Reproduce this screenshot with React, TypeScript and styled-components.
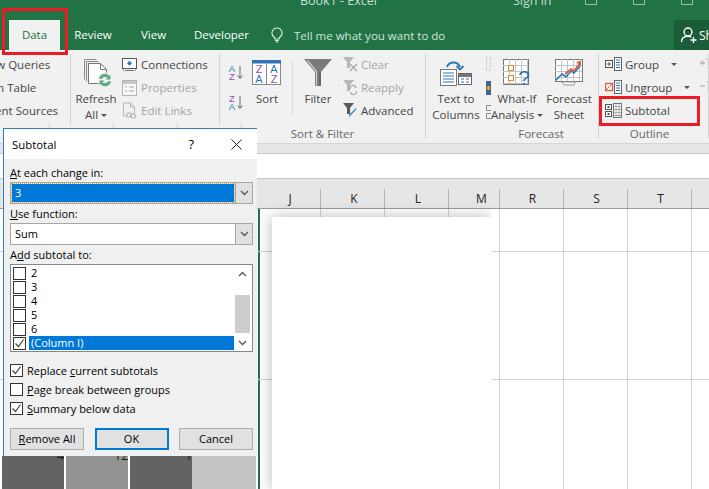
import styled, { createGlobalStyle } from "styled-components";

const FONT = `"Open Sans", "Noto Sans", sans-serif`;
const GREEN = "#217346";

const Global = createGlobalStyle`
  html, body { margin: 0; padding: 0; background: #fff; }
  body { font-family: ${FONT}; font-size: 11.5px; }
  * { box-sizing: border-box; }
`;

const Page = styled.div`
  position: relative;
  width: 709px;
  height: 489px;
  overflow: hidden;
  background: #fff;
`;

/* ---- title + tabs ---- */
const Head = styled.header`
  background: ${GREEN};
  height: 50px;
  color: #fff;
`;
const TitleBar = styled.div`
  height: 20px;
  overflow: hidden;
  display: flex;
  color: #c9ded2;
  font-size: 12.5px;
  line-height: 16px;
`;
const TitleBit = styled.span<{ $w: number }>`
  width: ${(p) => p.$w}px;
  flex: none;
  margin-top: -7px;
`;
const WinGlyph = styled.i<{ $w: number }>`
  display: block;
  flex: none;
  width: 12px;
  height: 5px;
  margin-right: ${(p) => p.$w}px;
  border: 1px solid #9dbfac;
  border-top: 0;
`;
const TabRow = styled.nav`
  height: 30px;
  display: flex;
  padding-left: 9px;
`;
const Tab = styled.div<{ $w: number; $active?: boolean }>`
  width: ${(p) => p.$w}px;
  height: 30px;
  line-height: 30px;
  text-align: center;
  font-size: 11.5px;
  background: ${(p) => (p.$active ? "#f1f1f1" : "transparent")};
  color: ${(p) => (p.$active ? GREEN : "#fff")};
`;
const TellMe = styled.div`
  display: flex;
  align-items: center;
  gap: 11px;
  margin-left: 9px;
  color: #d3e3da;
  font-size: 11.5px;
`;
const Share = styled.div`
  margin-left: auto;
  width: 35px;
  background: #1b5c39;
  display: flex;
  align-items: center;
  gap: 1px;
  padding-left: 6px;
  overflow: hidden;
  white-space: nowrap;
  font-size: 12px;
`;

/* ---- ribbon ---- */
const Ribbon = styled.section`
  height: 93px;
  display: flex;
  background: #f1f1f1;
  color: #444;
  padding-top: 4px;
  overflow: hidden;
  white-space: nowrap;
`;
const Group = styled.div<{ $w: number }>`
  width: ${(p) => p.$w}px;
  flex: none;
  height: 84px;
  border-right: 1px solid #d4d4d4;
  display: flex;
  flex-direction: column;
  overflow: hidden;
`;
const Tools = styled.div<{ $pad: number }>`
  height: 69px;
  display: flex;
  padding-left: ${(p) => p.$pad}px;
`;
const GroupLabel = styled.div<{ $pl?: number; $pr?: number }>`
  height: 15px;
  line-height: 15px;
  margin-top: 3px;
  padding-left: ${(p) => p.$pl ?? 0}px;
  padding-right: ${(p) => p.$pr ?? 0}px;
  text-align: center;
  color: #666;
`;
const Big = styled.div<{ $w: number; $ml?: number }>`
  width: ${(p) => p.$w}px;
  margin-left: ${(p) => p.$ml ?? 0}px;
  flex: none;
  display: flex;
  flex-direction: column;
  align-items: center;
`;
const BigIcon = styled.div<{ $pl?: number }>`
  height: 37px;
  padding-left: ${(p) => p.$pl ?? 0}px;
  display: flex;
  align-items: center;
  justify-content: center;
`;
const BigText = styled.div`
  line-height: 16px;
  text-align: center;
`;
const Caret = styled.i<{ $ml?: number }>`
  display: inline-block;
  vertical-align: middle;
  margin-left: ${(p) => p.$ml ?? 3}px;
  border-left: 3px solid transparent;
  border-right: 3px solid transparent;
  border-top: 3px solid #555;
`;
const SmallCol = styled.div<{ $ml?: number }>`
  margin-left: ${(p) => p.$ml ?? 0}px;
  flex: none;
  display: flex;
  flex-direction: column;
`;
const Small = styled.div<{ $off?: boolean }>`
  height: 23px;
  padding-bottom: 2px;
  display: flex;
  align-items: center;
  gap: 3px;
  color: ${(p) => (p.$off ? "#a3a3a3" : "#444")};
`;
const SortCol = styled.div`
  flex: none;
  width: 16px;
  display: flex;
  flex-direction: column;
  gap: 14px;
  padding-top: 10px;
`;
const InnerSep = styled.div<{ $ml: number }>`
  width: 1px;
  height: 55px;
  margin: 6px 0 0 ${(p) => p.$ml}px;
  background: #dadada;
  flex: none;
`;
const ThinCol = styled.div`
  flex: none;
  width: 8px;
  margin-left: 5px;
  display: flex;
  flex-direction: column;
  padding-top: 3px;
  gap: 10px;
`;

/* ---- sheet ---- */
const Strip = styled.div`
  height: 10px;
  background: #e6e6e6;
  border-top: 1px solid #d4d4d4;
`;
const FormulaBar = styled.div`
  height: 26px;
  border-top: 1px solid #c6c6c6;
  border-bottom: 1px solid #c6c6c6;
  background: #fff;
`;
const HeaderRow = styled.div`
  height: 30px;
  display: flex;
  align-items: flex-end;
  background: #e6e6e6;
  border-bottom: 1px solid #9b9b9b;
`;
const ColHead = styled.div<{ $w: number; $pl?: number }>`
  width: ${(p) => p.$w}px;
  flex: none;
  height: 19px;
  line-height: 19px;
  padding-left: ${(p) => p.$pl ?? 0}px;
  text-align: center;
  color: #222;
  font-size: 12px;
  border-right: 1px solid #b4b4b4;
`;
const Row = styled.div<{ $h: number }>`
  height: ${(p) => p.$h}px;
  display: flex;
  border-bottom: 1px solid #d2d2d2;
`;
const Cell = styled.div<{ $w: number; $frozen?: boolean }>`
  width: ${(p) => p.$w}px;
  flex: none;
  border-right: ${(p) => (p.$frozen ? `2px solid ${GREEN}` : "1px solid #d2d2d2")};
`;

const Blank = styled.div`
  position: absolute;
  left: 272px;
  top: 217px;
  width: 219px;
  height: 272px;
  background: #fff;
  box-shadow: 0 0 14px rgba(0, 0, 0, 0.28);
  clip-path: inset(-20px 0 0 -20px);
`;

const Annot = styled.div<{ $x: number; $y: number; $w: number; $h: number }>`
  position: absolute;
  left: ${(p) => p.$x}px;
  top: ${(p) => p.$y}px;
  width: ${(p) => p.$w}px;
  height: ${(p) => p.$h}px;
  border: 3px solid #ed1c24;
`;

const Ticks = styled.div`
  position: absolute;
  left: 0;
  top: 125px;
  width: 257px;
  height: 4px;
  background: repeating-linear-gradient(
    to right,
    #f1f1f1 0 49px,
    #c9c9c9 49px 50px,
    #f1f1f1 50px 64px
  );
`;

/* ---- dialog ---- */
const Dialog = styled.div`
  position: absolute;
  left: 3px;
  top: 128px;
  width: 254px;
  height: 328px;
  background: #f0f0f0;
  border: 1px solid #2f7fc4;
  border-bottom: 0;
  border-right: 0;
  color: #000;
  display: flex;
  flex-direction: column;
  font-size: 11px;
`;
const DlgTitle = styled.div`
  height: 30px;
  flex: none;
  background: #fff;
  display: flex;
  align-items: center;
  padding: 0 15px 0 8px;
  font-size: 11.4px;
`;
const Help = styled.span`
  margin-left: auto;
  margin-right: 37px;
  font-size: 13px;
`;
const DlgBody = styled.div`
  padding: 5px 4px 0 6px;
  display: flex;
  flex-direction: column;
`;
const FieldLabel = styled.div`
  height: 18px;
  line-height: 17px;
`;
const Select = styled.div`
  height: 22px;
  border: 1px solid #a6a6a6;
  background: #fff;
  display: flex;
  margin-bottom: 1px;
`;
const SelectValue = styled.div<{ $sel?: boolean }>`
  flex: 1;
  margin: 1px;
  padding-left: 3px;
  line-height: 18px;
  color: ${(p) => (p.$sel ? "#fff" : "#000")};
  background: ${(p) => (p.$sel ? "#0078d7" : "#fff")};
  outline: ${(p) => (p.$sel ? "1px dotted #e9a23b" : "none")};
`;
const SelectBtn = styled.div`
  width: 17px;
  flex: none;
  background: #e1e1e1;
  border-left: 1px solid #a6a6a6;
  display: flex;
  align-items: center;
  justify-content: center;
`;
const ListBox = styled.div`
  height: 88px;
  border: 1px solid #828790;
  background: #fff;
  display: flex;
  padding-left: 2px;
  padding-top: 1px;
  margin-bottom: 9px;
`;
const ListItems = styled.div`
  flex: 1;
  display: flex;
  flex-direction: column;
`;
const ListItem = styled.div`
  height: 14px;
  display: flex;
  align-items: center;
  gap: 3px;
`;
const ItemText = styled.span<{ $sel?: boolean }>`
  flex: 1;
  height: 14px;
  line-height: 14px;
  padding-left: 2px;
  color: ${(p) => (p.$sel ? "#fff" : "#000")};
  background: ${(p) => (p.$sel ? "#0078d7" : "transparent")};
`;
const Box = styled.span`
  width: 13px;
  height: 13px;
  flex: none;
  background: #fff;
  border: 1px solid #333;
  display: flex;
  align-items: center;
  justify-content: center;
`;
const ScrollBar = styled.div`
  width: 18px;
  flex: none;
  padding: 0 2px 0 1px;
  display: flex;
  flex-direction: column;
  align-items: center;
  justify-content: space-between;
  margin-top: -1px;
  position: relative;
`;
const Arrow = styled.div`
  height: 17px;
  display: flex;
  align-items: center;
  justify-content: center;
`;
const Thumb = styled.div`
  position: absolute;
  top: 30px;
  left: 1px;
  width: 15px;
  height: 38px;
  background: #cdcdcd;
`;
const CheckRow = styled.label`
  height: 19px;
  display: flex;
  align-items: center;
  gap: 4px;
`;
const Buttons = styled.div`
  display: flex;
  justify-content: space-between;
  margin-top: 10px;
`;
const Btn = styled.div<{ $primary?: boolean }>`
  width: 74px;
  height: 22px;
  line-height: ${(p) => (p.$primary ? 18 : 20)}px;
  text-align: center;
  background: #e1e1e1;
  border: ${(p) => (p.$primary ? "2px solid #0078d7" : "1px solid #adadad")};
`;

const DataStrip = styled.div`
  position: absolute;
  left: 2px;
  top: 456px;
  width: 254px;
  height: 33px;
  display: flex;
`;
const DataCell = styled.div<{ $bg: string; $w: number }>`
  width: ${(p) => p.$w}px;
  flex: none;
  background: ${(p) => p.$bg};
  overflow: hidden;
  text-align: right;
  line-height: 12px;
  color: #111;
  font-size: 12px;
`;
const DataNum = styled.div`
  margin-top: -6px;
`;

/* ---- icons ---- */
const Svg = ({ w, h, children }: { w: number; h: number; children: React.ReactNode }) => (
  <svg width={w} height={h} viewBox={`0 0 ${w} ${h}`} fill="none" style={{ flex: "none", display: "block" }}>
    {children}
  </svg>
);

const Bulb = () => (
  <Svg w={12} h={16}>
    <path d="M6 1a5 5 0 0 0-3 9c.8.7 1 1.3 1 2h4c0-.7.2-1.3 1-2a5 5 0 0 0-3-9z" stroke="#e4eee8" strokeWidth="1.1" />
    <path d="M4 13.5h4M4.8 15h2.4" stroke="#e4eee8" />
  </Svg>
);
const Person = () => (
  <Svg w={18} h={18}>
    <circle cx="8" cy="6" r="4" stroke="#fff" strokeWidth="1.4" />
    <path d="M1.5 16c0-3.5 2.5-5.8 6.5-5.8 1.3 0 2.4.2 3.3.7" stroke="#fff" strokeWidth="1.4" />
    <path d="M13.5 11v6M10.5 14h6" stroke="#fff" strokeWidth="1.4" />
  </Svg>
);
const RefreshIcon = () => (
  <Svg w={30} h={30}>
    <path d="M1.5 1.5h12M1.5 1.5v20M3.5 3.5h12M3.5 3.5v20" stroke="#8a8a8a" />
    <path d="M5.5 5.5h12l6 6v14h-18z" fill="#fff" stroke="#777" />
    <path d="M17.5 5.5v6h6" stroke="#777" />
    <circle cx="22" cy="22" r="7.5" fill="#f1f1f1" />
    <path d="M16 20.5a6 6 0 0 1 10.5-2.5l1-1.5v5h-5l2-1.7a4 4 0 0 0-6 1.2z" fill="#5fa888" />
    <path d="M28 23.5a6 6 0 0 1-10.5 2.5l-1 1.5v-5h5l-2 1.7a4 4 0 0 0 6-1.2z" fill="#5fa888" />
  </Svg>
);
const ConnIcon = () => (
  <Svg w={16} h={14}>
    <rect x="0.5" y="0.5" width="14" height="10" fill="#fff" stroke="#555" />
    <path d="M7.5 2.8l2.5 2.5-2.5 2.5L5 5.3z" fill="#2e75b6" />
    <path d="M3 12.5h9" stroke="#777" />
    <path d="M1 11l1 2M14 11l-1 2" stroke="#999" />
  </Svg>
);
const PropsIcon = () => (
  <Svg w={16} h={16}>
    <rect x="0.5" y="0.5" width="14" height="15" fill="#f7f7f7" stroke="#b5b5b5" />
    <rect x="1" y="1" width="13" height="3" fill="#c7c7c7" />
    <path d="M3 7h2M3 11h2M7 7h5M7 11h5" stroke="#a8a8a8" />
  </Svg>
);
const LinksIcon = () => (
  <Svg w={16} h={17}>
    <path d="M1.5 1h7l4 4v7M1.5 1v13h3" stroke="#b5b5b5" />
    <path d="M8.5 1v4h4" stroke="#b5b5b5" />
    <rect x="4.5" y="11" width="5" height="4" rx="2" stroke="#a5a5a5" />
    <rect x="8.5" y="12" width="5" height="4" rx="2" stroke="#a5a5a5" />
  </Svg>
);
const Letter = ({ x, y, c, s = 9.5, children }: { x: number; y: number; c: string; s?: number; children: string }) => (
  <text x={x} y={y} fill={c} fontSize={s} textAnchor="middle" fontFamily="Liberation Sans, sans-serif">
    {children}
  </text>
);
const BLUE = "#2e75b6";
const PURPLE = "#8a52b5";
const SortSmall = ({ top, bottom, tc, bc }: { top: string; bottom: string; tc: string; bc: string }) => (
  <Svg w={16} h={16}>
    <Letter x={4} y={7.5} c={tc}>{top}</Letter>
    <Letter x={4} y={15.5} c={bc}>{bottom}</Letter>
    <path d="M12 2v12M9.5 11.5l2.5 3 2.5-3" stroke="#666" />
  </Svg>
);
const SortBig = () => (
  <Svg w={30} h={25}>
    <rect x="0.5" y="0.5" width="28" height="24" fill="#fff" stroke="#888" />
    <rect x="0" y="0" width="29" height="3.5" fill="#2e75b6" />
    <path d="M14.5 3v21" stroke="#888" />
    <Letter x={7} y={13} c={PURPLE} s={11}>Z</Letter>
    <Letter x={7} y={23} c={BLUE} s={11}>A</Letter>
    <Letter x={22} y={13} c={BLUE} s={11}>A</Letter>
    <Letter x={22} y={23} c={PURPLE} s={11}>Z</Letter>
  </Svg>
);
const FilterBig = () => (
  <Svg w={28} h={28}>
    <path d="M0 0h28L17 13v14h-6V13z" fill="#7b7b7b" />
    <path d="M3.5 1.5L12.5 12.5v14" stroke="#cfcfcf" strokeWidth="1.2" />
    <path d="M15 13h2v14h-2z" fill="#666" />
  </Svg>
);
const MiniFunnel = ({ c }: { c: string }) => <path d="M0 0h11L7 5v6H4V5z" fill={c} />;
const ClearIcon = () => (
  <Svg w={15} h={15}>
    <MiniFunnel c="#b8b8b8" />
    <path d="M7 7l7 7M14 7l-7 7" stroke="#a5a5a5" strokeWidth="1.2" />
  </Svg>
);
const ReapplyIcon = () => (
  <Svg w={15} h={15}>
    <MiniFunnel c="#b8b8b8" />
    <path d="M7 9a3 3 0 0 1 6-1M13.5 11a3 3 0 0 1-6 1" stroke="#a5a5a5" strokeWidth="1.2" />
  </Svg>
);
const AdvIcon = () => (
  <Svg w={15} h={15}>
    <MiniFunnel c="#5a5a5a" />
    <path d="M14 5.5l-6 6.5-2 2.5.5-3 6-6z" fill="#2e75b6" />
  </Svg>
);
const TextColIcon = () => (
  <Svg w={32} h={26}>
    <path d="M7 7a7 7 0 0 1 13 0" stroke="#2e75b6" strokeWidth="2" />
    <path d="M16.5 6l3.5 3.5L23.5 6" stroke="#2e75b6" strokeWidth="1.8" />
    <rect x="0.5" y="9.5" width="16" height="16" fill="#fff" stroke="#777" />
    <path d="M3 13h11M3 16h11M3 19h11M3 22h11" stroke="#2e75b6" />
    <rect x="18.5" y="13.5" width="13" height="11" fill="#fff" stroke="#666" />
    <rect x="19" y="14" width="12" height="3" fill="#777" />
    <path d="M21 19h3M26 19h3M21 22h3M26 22h3" stroke="#2e75b6" />
  </Svg>
);
const FlashFill = () => (
  <Svg w={5} h={14}>
    <rect x="0.5" y="0.5" width="4" height="13" stroke="#c9c9c9" strokeDasharray="2 1" />
  </Svg>
);
const RemoveDup = () => (
  <Svg w={5} h={14}>
    <rect width="5" height="14" fill="#44648c" />
    <rect x="1" y="5" width="3" height="4" fill="#e0a030" />
  </Svg>
);
const ValidIcon = () => (
  <Svg w={5} h={14}>
    <path d="M5 .5H.5v5H5M5 8.5H.5v5H5" stroke="#888" />
  </Svg>
);
const Lattice = ({ w, h, sx, sy }: { w: number; h: number; sx: number; sy: number }) => {
  const lines: string[] = [];
  for (let x = sx; x < w; x += sx) lines.push(`M${x + 0.5} 0v${h}`);
  for (let y = sy; y < h; y += sy) lines.push(`M0 ${y + 0.5}h${w}`);
  return (
    <>
      <rect x="0.5" y="0.5" width={w} height={h} fill="#fff" stroke="#777" />
      <path d={lines.join("")} stroke="#c4c4c4" />
    </>
  );
};
const WhatIfIcon = () => (
  <Svg w={28} h={27}>
    <Lattice w={25} h={25} sx={6} sy={6} />
    <rect x="5.5" y="6.5" width="5" height="5" fill="#fff" stroke="#e08a2e" />
    <rect x="5.5" y="16.5" width="5" height="5" fill="#fff" stroke="#e08a2e" />
    <Letter x={21} y={26} c={BLUE} s={21}>?</Letter>
  </Svg>
);
const ForecastIcon = () => (
  <Svg w={29} h={27}>
    <Lattice w={27} h={22} sx={6} sy={6} />
    <path d="M1 21l6-6 4 3 5-6 3 2 6-7" stroke="#2e75b6" strokeWidth="1.6" />
    <path d="M10 15l6-5 3 2 6-8" stroke="#d9603b" strokeWidth="1.8" />
    <path d="M21 3l5-1v5z" fill="#d9603b" />
    <path d="M7 23h13l-1 3H9z" fill="#fff" stroke="#999" />
  </Svg>
);
const GroupIcon = ({ red }: { red?: boolean }) => (
  <Svg w={17} h={15}>
    {red ? (
      <>
        <rect x="0.5" y="3.5" width="7" height="7" fill="#fff" stroke="#d9603b" strokeWidth="1.4" />
        <path d="M1 10l6-6" stroke="#d9603b" />
      </>
    ) : (
      <>
        <rect x="0.5" y="3.5" width="7" height="7" fill="#fff" stroke="#555" />
        <path d="M2 7h4M4 5v4" stroke="#555" />
      </>
    )}
    <rect x="9.5" y="0.5" width="7" height="13" fill="#fff" stroke="#666" />
    <path d="M11 3h4M11 5.5h4M11 8h4M11 10.5h4" stroke="#2e75b6" />
  </Svg>
);
const SubtotalIcon = () => (
  <Svg w={17} h={15}>
    <rect x="0.5" y="1.5" width="6" height="5" fill="#fff" stroke="#555" />
    <rect x="0.5" y="8.5" width="6" height="5" fill="#fff" stroke="#555" />
    <path d="M2 4h3M3.5 3v2M2 11h3M3.5 10v2" stroke="#555" />
    <rect x="8.5" y="0.5" width="8" height="14" fill="#fff" stroke="#777" />
    <path d="M11 1v13M14 1v13M9 3.5h7M9 6.5h7M9 9.5h7M9 12.5h7" stroke="#9fb4c8" />
    <path d="M11 6.5h5M11 12.5h5" stroke="#d9903b" />
  </Svg>
);
const OutlineRight = ({ plus }: { plus?: boolean }) => (
  <Svg w={14} h={13}>
    <path d={plus ? "M0 5h5M2.5 2.5v5" : "M0 5h5"} stroke="#b5b5b5" strokeWidth="1.3" />
    <path d="M6 1h8M7 4h7M7 7h7M7 10h7" stroke="#c4c4c4" />
  </Svg>
);
const CloseX = () => (
  <Svg w={11} h={11}>
    <path d="M.5.5l10 10M10.5.5l-10 10" stroke="#222" />
  </Svg>
);
const Chevron = ({ up }: { up?: boolean }) => (
  <Svg w={9} h={6}>
    <path d={up ? "M1 5l3.5-3.5L8 5" : "M1 1l3.5 3.5L8 1"} stroke="#555" strokeWidth="1.3" />
  </Svg>
);
const Tick = () => (
  <Svg w={11} h={11}>
    <path d="M1.5 5.5l3 3 5-7" stroke="#444" strokeWidth="1.2" />
  </Svg>
);

/* ---- data ---- */
const COLS = [
  { name: "J", w: 64, pl: 3 },
  { name: "K", w: 64, pl: 3 },
  { name: "L", w: 64, pl: 3 },
  { name: "M", w: 51, pl: 15 },
  { name: "R", w: 64, pl: 2 },
  { name: "S", w: 64, pl: 2 },
  { name: "T", w: 64, pl: 2 },
];
const ROWS = [43, 128, 110];

export default function App() {
  return (
    <Page>
      <Global />
      <Head>
        <TitleBar>
          <TitleBit $w={300} />
          <TitleBit $w={213}>Book1 - Excel</TitleBit>
          <TitleBit $w={72}>Sign in</TitleBit>
          <WinGlyph $w={36} />
          <WinGlyph $w={36} />
          <WinGlyph $w={0} />
        </TitleBar>
        <TabRow>
          <Tab $w={51} $active>Data</Tab>
          <Tab $w={66}>Review</Tab>
          <Tab $w={55}>View</Tab>
          <Tab $w={81}>Developer</Tab>
          <TellMe>
            <Bulb />
            Tell me what you want to do
          </TellMe>
          <Share>
            <Person />
            Share
          </Share>
        </TabRow>
      </Head>

      <Ribbon>
        <Group $w={71}>
          <Tools $pad={0}>
            <SmallCol $ml={-24}>
              <Small>Show Queries</Small>
              <Small>From Table</Small>
              <Small>Recent Sources</Small>
            </SmallCol>
          </Tools>
        </Group>
        <Group $w={149}>
          <Tools $pad={4}>
            <Big $w={42}>
              <BigIcon $pl={3}><RefreshIcon /></BigIcon>
              <BigText>Refresh<br />All<Caret /></BigText>
            </Big>
            <SmallCol $ml={5}>
              <Small><ConnIcon /> Connections</Small>
              <Small $off><PropsIcon /> Properties</Small>
              <Small $off><LinksIcon /> Edit Links</Small>
            </SmallCol>
          </Tools>
        </Group>
        <Group $w={206}>
          <Tools $pad={8}>
            <SortCol>
              <SortSmall top="A" bottom="Z" tc={BLUE} bc={PURPLE} />
              <SortSmall top="Z" bottom="A" tc={PURPLE} bc={BLUE} />
            </SortCol>
            <Big $w={30} $ml={8}>
              <BigIcon><SortBig /></BigIcon>
              <BigText>Sort</BigText>
            </Big>
            <InnerSep $ml={10} />
            <Big $w={38} $ml={6}>
              <BigIcon><FilterBig /></BigIcon>
              <BigText>Filter</BigText>
            </Big>
            <SmallCol $ml={6}>
              <Small $off><ClearIcon /> Clear</Small>
              <Small $off><ReapplyIcon /> Reapply</Small>
              <Small><AdvIcon /> Advanced</Small>
            </SmallCol>
          </Tools>
          <GroupLabel>Sort &amp; Filter</GroupLabel>
        </Group>
        <Group $w={173}>
          <Tools $pad={5}>
            <Big $w={50}>
              <BigIcon><TextColIcon /></BigIcon>
              <BigText>Text to<br />Columns</BigText>
            </Big>
            <ThinCol>
              <FlashFill />
              <RemoveDup />
              <ValidIcon />
            </ThinCol>
            <Big $w={56} $ml={-5}>
              <BigIcon><WhatIfIcon /></BigIcon>
              <BigText>What-If<br />Analysis<Caret /></BigText>
            </Big>
            <Big $w={48}>
              <BigIcon><ForecastIcon /></BigIcon>
              <BigText>Forecast<br />Sheet</BigText>
            </Big>
          </Tools>
          <GroupLabel $pl={58}>Forecast</GroupLabel>
        </Group>
        <Group $w={110}>
          <Tools $pad={6}>
            <SmallCol>
              <Small><GroupIcon /> Group<Caret $ml={9} /></Small>
              <Small><GroupIcon red /> Ungroup<Caret $ml={9} /></Small>
              <Small><SubtotalIcon /> Subtotal</Small>
            </SmallCol>
            <SmallCol $ml={10}>
              <Small><OutlineRight plus /></Small>
              <Small><OutlineRight /></Small>
            </SmallCol>
          </Tools>
          <GroupLabel $pr={8}>Outline</GroupLabel>
        </Group>
      </Ribbon>

      <Strip />
      <FormulaBar />
      <HeaderRow>
        <ColHead $w={257} />
        {COLS.map((c) => (
          <ColHead key={c.name} $w={c.w} $pl={c.pl}>{c.name}</ColHead>
        ))}
      </HeaderRow>
      {ROWS.map((h) => (
        <Row key={h} $h={h}>
          <Cell $w={260} $frozen />
          {COLS.map((c, i) => (
            <Cell key={c.name} $w={i === 0 ? 61 : c.w} />
          ))}
        </Row>
      ))}

      <Blank />
      <Ticks />

      <Dialog>
        <DlgTitle>
          Subtotal
          <Help>?</Help>
          <CloseX />
        </DlgTitle>
        <DlgBody>
          <FieldLabel><u>A</u>t each change in:</FieldLabel>
          <Select>
            <SelectValue $sel>3</SelectValue>
            <SelectBtn><Chevron /></SelectBtn>
          </Select>
          <FieldLabel><u>U</u>se function:</FieldLabel>
          <Select>
            <SelectValue>Sum</SelectValue>
            <SelectBtn><Chevron /></SelectBtn>
          </Select>
          <FieldLabel>A<u>d</u>d subtotal to:</FieldLabel>
          <ListBox>
            <ListItems>
              {["2", "3", "4", "5", "6"].map((n) => (
                <ListItem key={n}>
                  <Box />
                  <ItemText>{n}</ItemText>
                </ListItem>
              ))}
              <ListItem>
                <Box><Tick /></Box>
                <ItemText $sel>(Column I)</ItemText>
              </ListItem>
            </ListItems>
            <ScrollBar>
              <Arrow><Chevron up /></Arrow>
              <Thumb />
              <Arrow><Chevron /></Arrow>
            </ScrollBar>
          </ListBox>
          <CheckRow><Box><Tick /></Box><span>Replace <u>c</u>urrent subtotals</span></CheckRow>
          <CheckRow><Box /><span><u>P</u>age break between groups</span></CheckRow>
          <CheckRow><Box><Tick /></Box><span><u>S</u>ummary below data</span></CheckRow>
          <Buttons>
            <Btn><u>R</u>emove All</Btn>
            <Btn $primary>OK</Btn>
            <Btn>Cancel</Btn>
          </Buttons>
        </DlgBody>
      </Dialog>

      <DataStrip>
        <DataCell $bg="#636363" $w={62}><DataNum>4</DataNum></DataCell>
        <DataCell $bg="#fff" $w={2} />
        <DataCell $bg="#939393" $w={62}><DataNum>12</DataNum></DataCell>
        <DataCell $bg="#fff" $w={2} />
        <DataCell $bg="#636363" $w={62}><DataNum>1</DataNum></DataCell>
        <DataCell $bg="#c4c4c4" $w={64} />
      </DataStrip>

      <Annot $x={2} $y={8} $w={66} $h={47} />
      <Annot $x={599} $y={96} $w={101} $h={30} />
    </Page>
  );
}
